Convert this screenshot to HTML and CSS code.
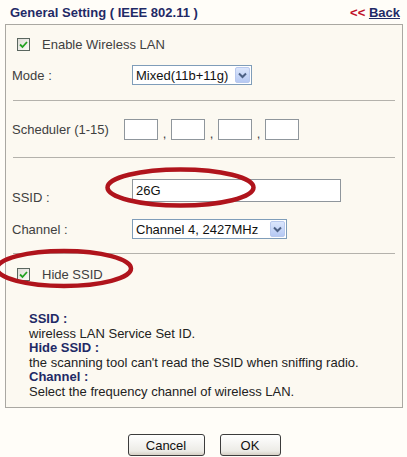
FILE: index.html
```html
<!DOCTYPE html>
<html>
<head>
<meta charset="utf-8">
<link rel="stylesheet" href="styles.css">
</head>
<body>
<div class="page">
  <div class="header">
    <span class="title">General Setting ( IEEE 802.11 )</span>
    <span class="back"><span class="lt">&lt;&lt;</span> <a class="back-link">Back</a></span>
  </div>
  <div class="panel">
    <div class="section s1">
      <div class="check-row"><span class="cb"><svg width="9" height="9" viewBox="0 0 9 9"><path d="M1 4.5 L3.5 7 L8 2" fill="none" stroke="#21a121" stroke-width="1.8"/></svg></span><span>Enable Wireless LAN</span></div>
      <div class="row">
        <span class="lbl">Mode :</span>
        <div class="select sel-mode"><span class="sel-text">Mixed(11b+11g)</span><span class="arrow"><svg width="9" height="7" viewBox="0 0 9 7"><path d="M1 1.5 L4.5 5 L8 1.5" fill="none" stroke="#4d6185" stroke-width="2"/></svg></span></div>
      </div>
    </div>
    <div class="sep"></div>
    <div class="section s2">
      <div class="row">
        <span class="lbl lbl-sched">Scheduler (1-15)</span>
        <span class="box"></span><span class="comma">,</span>
        <span class="box"></span><span class="comma">,</span>
        <span class="box"></span><span class="comma">,</span>
        <span class="box"></span>
      </div>
    </div>
    <div class="sep"></div>
    <div class="section s3">
      <div class="row row-ssid">
        <span class="lbl lbl-low">SSID :</span>
        <div class="text-input">26G</div>
      </div>
      <div class="row row-chan">
        <span class="lbl">Channel :</span>
        <div class="select sel-chan"><span class="sel-text">Channel 4, 2427MHz</span><span class="arrow"><svg width="9" height="7" viewBox="0 0 9 7"><path d="M1 1.5 L4.5 5 L8 1.5" fill="none" stroke="#4d6185" stroke-width="2"/></svg></span></div>
      </div>
    </div>
    <div class="sep"></div>
    <div class="section s4">
      <div class="check-row"><span class="cb"><svg width="9" height="9" viewBox="0 0 9 9"><path d="M1 4.5 L3.5 7 L8 2" fill="none" stroke="#21a121" stroke-width="1.8"/></svg></span><span>Hide SSID</span></div>
      <div class="help">
        <div class="help-h">SSID :</div>
        <div class="help-t">wireless LAN Service Set ID.</div>
        <div class="help-h">Hide SSID :</div>
        <div class="help-t">the scanning tool can't read the SSID when sniffing radio.</div>
        <div class="help-h">Channel :</div>
        <div class="help-t">Select the frequency channel of wireless LAN.</div>
      </div>
    </div>
  </div>
  <div class="actions">
    <span class="btn btn-cancel">Cancel</span>
    <span class="btn btn-ok">OK</span>
  </div>
  <svg class="marks" width="407" height="457" viewBox="0 0 407 457">
    <ellipse cx="180.5" cy="187.5" rx="73" ry="18" fill="none" stroke="#b0141c" stroke-width="4.5"/>
    <ellipse cx="64" cy="268.5" rx="67" ry="17.5" fill="none" stroke="#b0141c" stroke-width="4.5"/>
  </svg>
</div>
</body>
</html>
```

FILE: styles.css
```css
html, body {
  margin: 0;
  padding: 0;
}
body {
  background: #fffdf8;
  font-family: "Liberation Sans", Arial, sans-serif;
  font-size: 13px;
  color: #404040;
}
.page {
  position: relative;
  width: 407px;
  height: 457px;
  overflow: hidden;
}
.header {
  height: 24px;
  display: flex;
  justify-content: space-between;
  align-items: center;
  padding: 0 7px 0 10px;
}
.title {
  font-weight: bold;
  font-size: 13px;
  color: #1f2a66;
}
.back {
  font-weight: bold;
  font-size: 13px;
}
.lt {
  color: #c0102a;
}
.back-link {
  color: #1f2a66;
  text-decoration: underline;
}
.panel {
  margin: 0 4px 0 5px;
  border: 1px solid #aaa8a2;
  background: #fcf9f1;
  padding: 0 6px;
}
.sep {
  height: 1px;
  background: #b4b2ac;
  margin: 0 1px;
}
.section {
  display: flex;
  flex-direction: column;
}
.s1 { height: 75px; padding-top: 10px; box-sizing: border-box; }
.s2 { height: 56px; justify-content: center; }
.s3 { height: 95px; padding-top: 21px; box-sizing: border-box; }
.s4 { height: 153px; padding-top: 11px; box-sizing: border-box; }
.check-row {
  display: flex;
  align-items: center;
  height: 18px;
  padding-left: 5px;
}
.cb {
  width: 11px;
  height: 11px;
  border: 1px solid #5a665f;
  background: linear-gradient(135deg, #dcdcd6, #fbfbf8);
  display: flex;
  align-items: center;
  justify-content: center;
  margin-right: 12px;
}
.row {
  display: flex;
  align-items: center;
}
.s1 .row {
  margin-top: 12px;
}
.lbl {
  width: 120px;
  flex: none;
}
.lbl-sched {
  width: 112px;
}
.select {
  box-sizing: border-box;
  height: 20px;
  border: 1px solid #7f9db9;
  background: #fff;
  display: flex;
  align-items: center;
  justify-content: space-between;
  padding: 0 1px 0 3px;
  color: #111;
  font-size: 13px;
}
.sel-mode { width: 120px; }
.sel-chan { width: 155px; }
.arrow {
  width: 15px;
  height: 16px;
  background: linear-gradient(#dbe6fc, #b6c9f3);
  border: 1px solid #b9c9ee;
  box-sizing: border-box;
  display: flex;
  align-items: center;
  justify-content: center;
  border-radius: 2px;
}
.box {
  width: 34px;
  height: 21px;
  box-sizing: border-box;
  border: 1px solid #8f969c;
  background: #fff;
}
.comma {
  width: 13px;
  text-align: center;
  padding-top: 8px;
}
.row-ssid {
  align-items: flex-start;
}
.lbl-low {
  padding-top: 11px;
}
.text-input {
  width: 209px;
  height: 23px;
  box-sizing: border-box;
  border: 1px solid #8f969c;
  background: #fff;
  color: #111;
  font-size: 13px;
  padding: 3px 3px;
}
.row-chan {
  margin-top: 14px;
}
.help {
  margin-top: 29px;
  padding-left: 17px;
  line-height: 14.5px;
}
.help-h {
  font-weight: bold;
  color: #1f2a66;
}
.help-t {
  color: #222;
}
.actions {
  display: flex;
  justify-content: center;
  gap: 15px;
  margin-top: 26px;
  padding-left: 1px;
}
.btn {
  box-sizing: border-box;
  height: 22px;
  border: 1px solid #3c3c3c;
  border-radius: 3px;
  background: linear-gradient(#ffffff, #ecebe6 80%, #d6d0c5);
  display: flex;
  align-items: center;
  justify-content: center;
  font-size: 13px;
  color: #111;
}
.btn-cancel { width: 77px; }
.btn-ok { width: 61px; }
.marks {
  position: absolute;
  left: 0;
  top: 0;
  pointer-events: none;
}
```
